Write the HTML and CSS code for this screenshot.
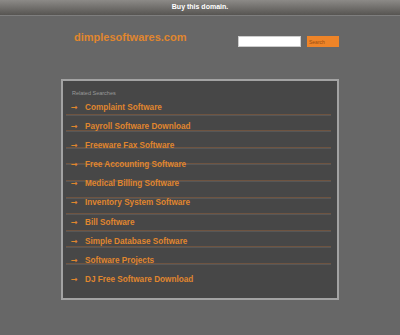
FILE: index.html
```html
<!DOCTYPE html>
<html lang="en">
<head>
<meta charset="UTF-8" />
<title>dimplesoftwares.com</title>
<link rel="stylesheet" href="styles.css">
</head>
<body>

<div class="topbar">Buy this domain.</div>

<div class="header">
  <div class="logo">dimplesoftwares.com</div>
  <form class="search">
    <input type="text" />
    <button type="button">Search</button>
  </form>
</div>

<div class="panel">
  <div class="related">Related Searches</div>
  <ul class="links">
    <li><span class="arrow">&rarr;</span>Complaint Software</li>
    <li><span class="arrow">&rarr;</span>Payroll Software Download</li>
    <li><span class="arrow">&rarr;</span>Freeware Fax Software</li>
    <li><span class="arrow">&rarr;</span>Free Accounting Software</li>
    <li><span class="arrow">&rarr;</span>Medical Billing Software</li>
    <li><span class="arrow">&rarr;</span>Inventory System Software</li>
    <li><span class="arrow">&rarr;</span>Bill Software</li>
    <li><span class="arrow">&rarr;</span>Simple Database Software</li>
    <li><span class="arrow">&rarr;</span>Software Projects</li>
    <li><span class="arrow">&rarr;</span>DJ Free Software Download</li>
  </ul>
</div>

</body>
</html>
```

FILE: styles.css
```css
body {
  margin: 0; padding: 0;
  background: #676767;
  font-family: "Liberation Sans", Arial, sans-serif;
}
.topbar {
  height: 15px;
  line-height: 14px;
  text-align: center;
  color: #fff;
  font-size: 7px;
  font-weight: bold;
  background: linear-gradient(#8c8a87, #575552);
  border-bottom: 1px solid #7e7e7e;
}
.header {
  display: flex;
  justify-content: space-between;
  width: 266px;
  margin-left: 73px;
  padding-top: 15px;
  height: 63px;
  box-sizing: border-box;
}
.logo {
  color: #e0862e;
  font-size: 11px;
  font-weight: bold;
  padding-left: 1px;
}
.search {
  display: flex;
  gap: 6px;
  margin-top: 5px;
  height: 11px;
}
.search input {
  width: 63px;
  height: 11px;
  padding: 0;
  border: 1px solid #ccc;
  box-sizing: border-box;
  background: #fff;
}
.search button {
  width: 32px;
  height: 11px;
  padding: 0 0 0 2px;
  border: none;
  background: #ee8428;
  color: #9a4d10;
  font-size: 5px;
  text-align: left;
}
.panel {
  width: 278px;
  height: 221px;
  margin-left: 61px;
  background: #474747;
  border: 2px solid #a3a3a3;
  box-sizing: border-box;
  padding-top: 9px;
}
.related {
  color: #9a9a9a;
  font-size: 5.5px;
  padding-left: 9px;
  height: 7.5px;
}
.links {
  list-style: none;
  margin: 0 0 0 3px;
  padding: 0;
  width: 265px;
  background-image: repeating-linear-gradient(
    transparent 0, transparent 14.6px,
    #6e5441 14.6px, #6e5441 15.6px,
    #575757 15.6px, #575757 16.6px);
  background-size: 265px 166px;
  background-position: 0 1px;
  background-repeat: no-repeat;
}
.links li {
  color: #e0862e;
  font-size: 8.2px;
  font-weight: bold;
  height: 19.2px;
  line-height: 19.2px;
  padding-left: 5px;
}
.arrow {
  display: inline-block;
  width: 14px;
  font-family: "DejaVu Sans", sans-serif;
  font-size: 8px;
}
```
